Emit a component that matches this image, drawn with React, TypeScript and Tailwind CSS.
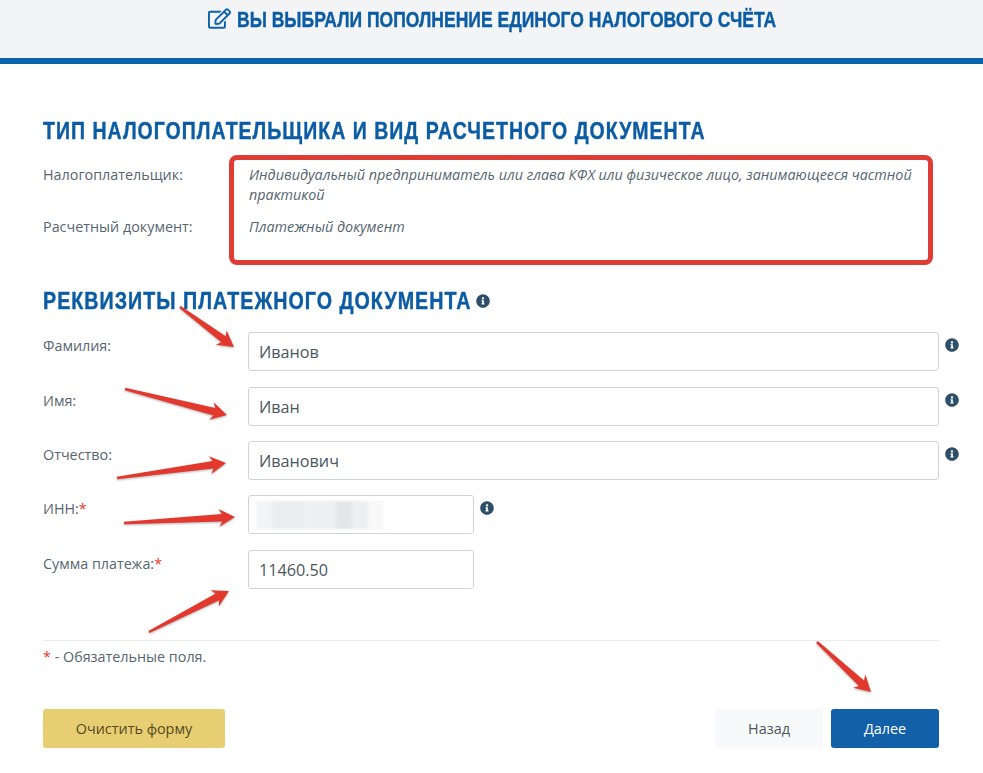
import { FaInfoCircle, FaRegEdit } from "react-icons/fa";

const heading =
  "w-max origin-left font-['Liberation_Sans',sans-serif] font-bold uppercase text-[#0b5ca3] [-webkit-text-stroke:0.4px_#0b5ca3]";

// tapered annotation arrow, from tail to tip
function Arrow({ x1, y1, x2, y2 }: { x1: number; y1: number; x2: number; y2: number }) {
  const len = Math.hypot(x2 - x1, y2 - y1);
  const ux = (x2 - x1) / len;
  const uy = (y2 - y1) / len;
  const nx = -uy;
  const ny = ux;
  const at = (along: number, side: number) =>
    `${x1 + ux * along + nx * side},${y1 + uy * along + ny * side}`;
  const neck = len - 13;
  const points = [
    at(0, 1.2),
    at(neck, 3.8),
    at(neck - 3, 9),
    at(len, 0),
    at(neck - 3, -9),
    at(neck, -3.8),
    at(0, -1.2),
  ].join(" ");
  return <polygon points={points} fill="#e2382d" />;
}

function Info({ className }: { className: string }) {
  return <FaInfoCircle className={`shrink-0 text-[14px] text-[#2f4f68] ${className}`} />;
}

function Row({
  label,
  required,
  value,
  short,
  info,
  tall,
  children,
}: {
  label: string;
  required?: boolean;
  value?: string;
  short?: boolean;
  info?: boolean;
  tall?: boolean;
  children?: React.ReactNode;
}) {
  return (
    <div className={`flex ${tall ? "h-[55px]" : "h-[54px]"}`}>
      <div className="w-[205px] shrink-0 pt-[4px] text-[14.35px] leading-[20px]">
        {label}
        {required && <span className="text-[#e2382d]">*</span>}
      </div>
      <div
        className={`h-[39px] shrink-0 rounded-[3px] border border-[#ced4da] bg-white px-[10px] text-[16.2px] leading-[38px] text-[#4b5760] ${
          short ? "w-[226px]" : "w-[691px]"
        }`}
      >
        {value}
        {children}
      </div>
      {info && <Info className="ml-[6px] mt-[6px]" />}
    </div>
  );
}

export default function App() {
  return (
    <div className="relative h-[773px] w-[983px] overflow-hidden bg-white font-['Open_Sans',sans-serif] text-[#566670]">
      <header className="flex h-[64px] justify-center border-b-[6px] border-[#0b62ad] bg-[#f3f4f6] pt-[6px]">
        <div className="flex items-start gap-[6px]">
          <FaRegEdit className="mt-px text-[23px] text-[#0b62ad]" />
          <div className="w-[538px]">
            <h2 className={`${heading} scale-x-[0.797] text-[22px] leading-[28px]`}>
              Вы выбрали пополнение единого налогового счёта
            </h2>
          </div>
        </div>
      </header>

      <main className="pl-[43px] pr-[44px] pt-[52px]">
        <h1 className={`${heading} scale-x-[0.848] text-[23px] leading-[30px] tracking-[1.2px]`}>
          Тип налогоплательщика и вид расчетного документа
        </h1>

        <div className="mt-[19px] flex text-[14.35px] leading-[20px]">
          <div className="w-[206px] shrink-0">Налогоплательщик:</div>
          <div className="flex-1 italic">
            Индивидуальный предприниматель или глава КФХ или физическое лицо, занимающееся частной практикой
          </div>
        </div>
        <div className="mt-[12px] flex text-[14.35px] leading-[20px]">
          <div className="w-[206px] shrink-0">Расчетный документ:</div>
          <div className="flex-1 italic">Платежный документ</div>
        </div>

        <div className="mt-[49px] flex items-center gap-[6px]">
          <div className="w-[427px]">
            <h1 className={`${heading} scale-x-[0.855] text-[23px] leading-[30px] tracking-[1.2px]`}>
              Реквизиты платежного документа
            </h1>
          </div>
          <Info className="" />
        </div>

        <div className="mt-[16px]">
          <Row label="Фамилия:" value="Иванов" info tall />
          <Row label="Имя:" value="Иван" info />
          <Row label="Отчество:" value="Иванович" info />
          <Row label="ИНН:" required short info tall>
            <div className="mt-[5px] flex h-[28px] w-[128px] -translate-x-[3px] blur-[1px]">
              <div className="w-[16px] bg-[#f3f4f5]" />
              <div className="w-[32px] bg-[#ebedee]" />
              <div className="w-[32px] bg-[#eeeff0]" />
              <div className="w-[16px] bg-[#e4e6e7]" />
              <div className="w-[16px] bg-[#eeeff0]" />
              <div className="w-[16px] bg-[#f8f8f9]" />
            </div>
          </Row>
          <Row label="Сумма платежа:" required value="11460.50" short />
        </div>

        <div className="mt-[36px] border-t border-[#e9ecef] pt-[6px] text-[14.35px] leading-[20px]">
          <span className="text-[#e2382d]">*</span> - Обязательные поля.
        </div>

        <div className="mt-[42px] flex text-[14.4px]">
          <button className="h-[39px] w-[182px] rounded-[3px] bg-[#e8ce72] text-[#544a1e]">Очистить форму</button>
          <button className="ml-auto h-[39px] w-[108px] rounded-[3px] bg-[#f8f9fa] text-[#4b5760]">Назад</button>
          <button className="ml-[8px] h-[39px] w-[108px] rounded-[3px] bg-[#1160a8] text-white">Далее</button>
        </div>
      </main>

      {/* annotations drawn over the page */}
      <div className="absolute left-[229px] top-[155px] h-[110px] w-[704px] rounded-[8px] border-[5px] border-[#e03c36]" />
      <svg
        className="pointer-events-none absolute left-0 top-0 drop-shadow-[0_1px_1px_rgba(0,0,0,0.3)]"
        width="983"
        height="773"
      >
        <Arrow x1={180} y1={307} x2={234} y2={347} />
        <Arrow x1={125} y1={389} x2={227} y2={415} />
        <Arrow x1={117} y1={478} x2={226} y2={463} />
        <Arrow x1={124} y1={523} x2={235} y2={517} />
        <Arrow x1={149} y1={632} x2={229} y2={591} />
        <Arrow x1={817} y1={642} x2={871} y2={692} />
      </svg>
    </div>
  );
}
